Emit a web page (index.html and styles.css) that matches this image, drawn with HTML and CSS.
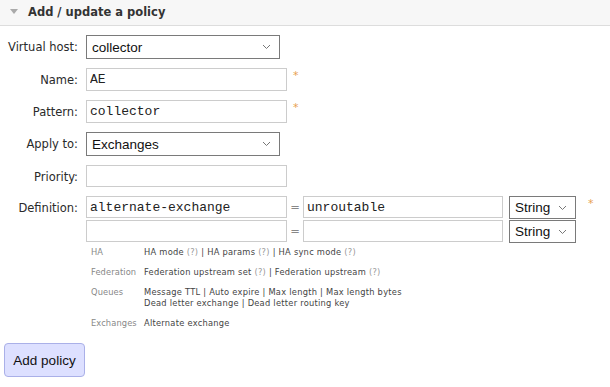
FILE: index.html
```html
<html>
<head>
<title>Add / update a policy</title>
<meta charset="utf-8">
<link rel="stylesheet" href="styles.css">
</head>
<body>

<div class="section">
<h2 class="section-head"><span class="tri"></span>Add / update a policy</h2>

<form class="policy-form" action="" method="get">

<div class="row">
	<label class="lbl">Virtual host:</label>
	<div class="sel-wrap wide">
		<select class="sel"><option>collector</option></select>
		<svg class="chev" width="9" height="6" viewBox="0 0 9 6"><path d="M1 1l3.5 3.5L8 1" fill="none" stroke="#777" stroke-width="1"/></svg>
	</div>
</div>

<div class="row r-input">
	<label class="lbl">Name:</label>
	<input class="txt" type="text" value="AE">
	<span class="req">*</span>
</div>

<div class="row r-input">
	<label class="lbl">Pattern:</label>
	<input class="txt" type="text" value="collector">
	<span class="req">*</span>
</div>

<div class="row">
	<label class="lbl">Apply to:</label>
	<div class="sel-wrap wide">
		<select class="sel"><option>Exchanges</option></select>
		<svg class="chev" width="9" height="6" viewBox="0 0 9 6"><path d="M1 1l3.5 3.5L8 1" fill="none" stroke="#777" stroke-width="1"/></svg>
	</div>
</div>

<div class="row r-prio">
	<label class="lbl">Priority:</label>
	<input class="txt" type="text" value="">
</div>

<div class="row r-def">
	<label class="lbl">Definition:</label>
	<div class="def">
		<div class="def-line">
			<input class="txt key" type="text" value="alternate-exchange">
			<span class="eq">=</span>
			<input class="txt val" type="text" value="unroutable">
			<div class="sel-wrap small">
				<select class="sel"><option>String</option></select>
				<svg class="chev" width="9" height="6" viewBox="0 0 9 6"><path d="M1 1l3.5 3.5L8 1" fill="none" stroke="#777" stroke-width="1"/></svg>
			</div>
			<span class="req def-req">*</span>
		</div>
		<div class="def-line">
			<input class="txt key" type="text" value="">
			<span class="eq">=</span>
			<input class="txt val" type="text" value="">
			<div class="sel-wrap small">
				<select class="sel"><option>String</option></select>
				<svg class="chev" width="9" height="6" viewBox="0 0 9 6"><path d="M1 1l3.5 3.5L8 1" fill="none" stroke="#777" stroke-width="1"/></svg>
			</div>
		</div>

		<table class="legend">
			<tr>
				<td class="grp">HA</td>
				<td>HA mode <span class="help">(?)</span> | HA params <span class="help">(?)</span> | HA sync mode <span class="help">(?)</span></td>
			</tr>
			<tr>
				<td class="grp">Federation</td>
				<td>Federation upstream set <span class="help">(?)</span> | Federation upstream <span class="help">(?)</span></td>
			</tr>
			<tr>
				<td class="grp">Queues</td>
				<td>Message TTL | Auto expire | Max length | Max length bytes<br>Dead letter exchange | Dead letter routing key</td>
			</tr>
			<tr>
				<td class="grp">Exchanges</td>
				<td>Alternate exchange</td>
			</tr>
		</table>
	</div>
</div>

<button class="btn" type="button">Add policy</button>

</form>
</div>

</body>
</html>
```

FILE: styles.css
```css
body {
	margin: 0px;
	padding: 0px;
	background: #fff;
	color: #222;
	font-family: "DejaVu Sans", Verdana, sans-serif;
	font-size: 11.5px;
}

.section-head {
	margin: 0px;
	height: 25px;
	line-height: 25px;
	padding-left: 10px;
	background: #f7f7f7;
	border-bottom: 1px solid #ddd;
	font-size: 11.5px;
	font-weight: bold;
	color: #333;
}
.tri {
	display: inline-block;
	width: 0px;
	height: 0px;
	border-left: 4px solid transparent;
	border-right: 4px solid transparent;
	border-top: 5px solid #aaa;
	margin-right: 10px;
	vertical-align: 2px;
}

.policy-form {
	margin: 0px;
	padding: 9px 0px 0px 0px;
}

.row {
	display: flex;
	align-items: flex-start;
	margin-bottom: 9px;
}
.lbl {
	width: 78px;
	flex: none;
	text-align: right;
	margin-right: 8px;
	line-height: 24px;
	color: #2a2a2a;
}
/* push label text down a pixel without growing the row */
.r-input .lbl { line-height: 25px; margin-bottom: -2px; }
.r-prio .lbl { line-height: 24px; margin-bottom: -2px; }
.r-def .lbl { line-height: 24px; margin-bottom: -2px; }

.txt {
	box-sizing: border-box;
	width: 201px;
	height: 23px;
	margin: 0px;
	padding: 0px 3px;
	border: 1px solid #ccc;
	font-family: "Liberation Mono", "Courier New", monospace;
	font-size: 13px;
	color: #222;
	outline: none;
}
.r-prio .txt { height: 22px; }

.req {
	color: #e8a050;
	font-size: 11px;
	margin-left: 6px;
	line-height: 16px;
}

.sel-wrap {
	position: relative;
	height: 24px;
}
.sel-wrap.wide { width: 194px; }
.sel-wrap.small { width: 67px; height: 23px; }
.sel {
	-webkit-appearance: none;
	appearance: none;
	box-sizing: border-box;
	width: 100%;
	height: 100%;
	margin: 0px;
	padding: 0px 5px;
	border: 1px solid #7a7a7a;
	border-radius: 0px;
	background: #fff;
	font-family: "Liberation Sans", Arial, sans-serif;
	font-size: 13.5px;
	color: #111;
	outline: none;
}
.chev {
	position: absolute;
	right: 9px;
	top: 9px;
	pointer-events: none;
}

.def-line {
	display: flex;
	align-items: flex-start;
	margin-bottom: 1px;
}
.def-line .txt { height: 22px; }
.eq {
	width: 16px;
	text-align: center;
	line-height: 22px;
	color: #888;
}
.val { width: 200px; }
.small { margin-left: 6px; }
.def-req { margin-left: 12px; }

.legend {
	border-collapse: collapse;
	margin-top: -1px;
	font-size: 8.3px;
	letter-spacing: 0.25px;
	color: #444;
}
.legend td {
	padding: 4px 0px 5px 5px;
	line-height: 11px;
	vertical-align: top;
}
.legend td.grp {
	width: 48px;
	letter-spacing: 0.1px;
	color: #888;
}
.help { color: #999; }

.btn {
	display: block;
	margin: 9px 0px 0px 4px;
	width: 81px;
	height: 34px;
	background: #dde0ff;
	border: 1px solid #aab0e8;
	border-radius: 4px;
	font-family: "Liberation Sans", Arial, sans-serif;
	font-size: 13.5px;
	color: #111;
	padding: 0px;
}
```
